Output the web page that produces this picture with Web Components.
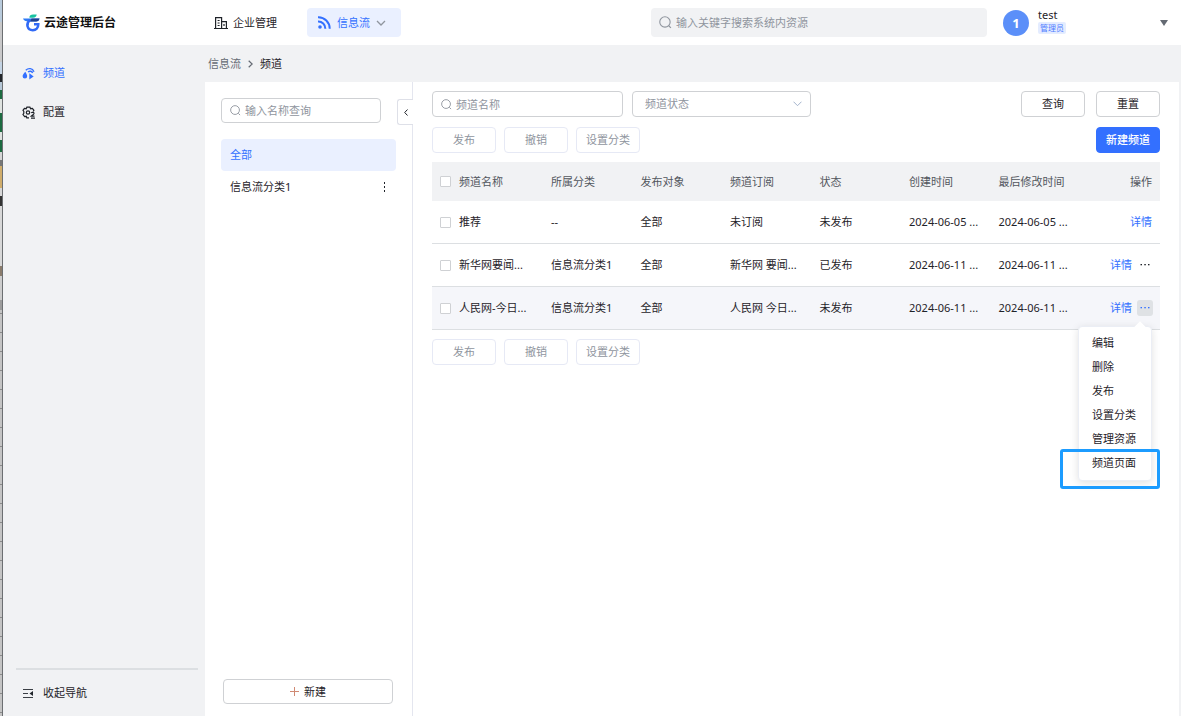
<!DOCTYPE html>
<html lang="zh-CN">
<head>
<meta charset="utf-8">
<title>云途管理后台</title>
<style>
html,body{margin:0;background:#fff}
body{font:11px/16px "Noto Sans","Noto Sans CJK SC",sans-serif;color:#1f2329}
</style>
</head>
<body>
<admin-app></admin-app>
<script>
const base = `<style>
*{box-sizing:border-box}
button,input,select{font:inherit;color:inherit;margin:0}
button{cursor:pointer}
svg{display:block;flex:none}
a{text-decoration:none;color:inherit}
</style>`;
function define(name, html, setup) {
  const t = document.createElement('template');
  t.innerHTML = base + html;
  customElements.define(name, class extends HTMLElement {
    constructor() {
      super();
      this.attachShadow({ mode: 'open' }).append(t.content.cloneNode(true));
    }
    connectedCallback() { if (setup) setup(this, this.shadowRoot); }
  });
}

/* Outlined / primary / disabled button */
define('ui-button', `<style>
:host{display:block;width:64px}
button{display:flex;align-items:center;justify-content:center;gap:5px;width:100%;height:var(--control-height,26px);padding:0;border:1px solid #cfd1d4;border-radius:4px;background:#fff}
:host([kind=primary]) button{background:#3370ff;border-color:#3370ff;color:#fff;font-weight:500}
:host([kind=disabled]) button{border-color:#e6e9f5;color:#8f959e}
</style><button type="button"><slot></slot></button>`, (el, root) => {
  root.querySelector('button').disabled = el.getAttribute('kind') === 'disabled';
});

/* Text box with a magnifier */
define('search-box', `<style>
:host{display:block}
label{display:flex;align-items:center;gap:4px;height:var(--control-height,26px);padding:0 8px;border:1px solid #cfd1d4;border-radius:4px;background:#fff;color:#8f959e}
:host([filled]) label{height:29px;border:0;background:#f1f2f4}
:host([filled]) svg{width:13px;height:13px}
input{flex:1;min-width:0;padding:0;border:0;outline:0;background:none;height:18px}
input::placeholder{color:#8f959e;opacity:1}
</style><label><svg width="11" height="11" viewBox="0 0 12 12" fill="none" stroke="#8f959e"><circle cx="5.5" cy="5.5" r="4.800"/><path d="M9 9L11 11"/></svg><input type="text"></label>`, (el, root) => {
  const i = root.querySelector('input');
  i.placeholder = el.getAttribute('placeholder');
  i.setAttribute('aria-label', i.placeholder);
});

/* Slice of the desktop that shows left of the window */
define('desktop-edge', `<style>
:host{display:block;border-right:1px solid #6c6f72;
background:
linear-gradient(#b9cbdc 0 22px,#c9c9ca 22px 62px,#c3d3e3 62px 74px,#23262b 74px 82px,#b5c7d6 82px 90px,#1d6b41 90px 99px,#dfe3e0 99px 113px,#1d6b41 113px 132px,#dfe3e0 132px 140px,#1d6b41 140px 152px,#d6d6d6 152px 160px,#777 160px 166px,#d0ad6b 166px 188px,#d8d8d8 188px 196px,#333 196px 206px,#d8d8d8 206px 266px,#8a7c6c 266px 276px,#cdcdcd 276px 300px,#9c9c9c 300px 310px,transparent 310px),
repeating-linear-gradient(#c4c4c4 0 9px,#8b8b8b 9px 10px,#c4c4c4 10px 19px)}
</style>`);

define('top-bar', `<style>
:host{display:flex;align-items:center;height:45px;padding:0 13px 0 20px;background:#fff}
.brand{display:flex;align-items:center;gap:3px;width:191px;margin:0;font-size:12px;line-height:16px;font-weight:700;color:#111}
nav{display:flex;align-items:center;gap:20px}
nav a{display:flex;align-items:center;gap:6px;height:29px}
nav a:first-child{gap:5px;padding-right:10px}
nav a.on{padding:0 15px 0 11px;background:#eaf0ff;color:#3370ff;border-radius:4px}
search-box{width:336px;margin:0 16px 0 auto}
.account{display:flex;align-items:center;width:165px}
.avatar{display:grid;place-items:center;width:26px;height:26px;border-radius:50%;background:#5b8ff9;color:#fff;font:700 13px/16px "Noto Sans",sans-serif}
.who{margin-left:9px;flex:1}
.who b{display:block;font-weight:400;line-height:14px}
.who span{display:inline-block;vertical-align:top;padding:0 2px;font-size:8px;line-height:12px;border-radius:2px;background:#e4ecff;color:#4f7dff}
</style>
<h1 class="brand"><svg width="18" height="18" viewBox="0 0 18 18"><path d="M6.400 3.700C6.400 1.600 7.800.5 10 .5h3.700c-.1 2-1.400 3.200-3.700 3.200z" fill="#19c2a0"/><path d="M0 4.400h16.500c-.3 2-1.500 3-3.500 3H5.500C2.500 7.400.6 6.500 0 4.400z" fill="#2f7bf5"/><path d="M7 5.800C4.800 7.800 3.900 10 4.500 12.300c.6 2.300 2.700 3.900 5.300 3.900 3.200 0 5.500-2.200 5.500-5.900H11" fill="none" stroke="#316af6" stroke-width="2.500"/><path d="M8.500 4.400h8c-.3 2-1.500 3-3.500 3H7.200z" fill="#22418f"/></svg>云途管理后台</h1>
<nav>
<a href="#org"><svg width="14" height="14" viewBox="0 0 14 14" fill="none" stroke="#1f2329" stroke-width="1.200"><path d="M1.600 12.500V1.600h6v10.900M7.600 5.600h4.800v6.900M0 12.500h14M3.600 4.500h2M3.600 7h2M3.600 9.500h2M10 8v2"/></svg>企业管理</a>
<a href="#feed" class="on"><svg width="13" height="13" viewBox="0 0 13 13" fill="none" stroke="#3370ff" stroke-width="2"><circle cx="2" cy="11" r="1.800" fill="#3370ff" stroke="none"/><path d="M0 5.500A7 7 0 0 1 7.300 12.800M0 1.300A11.300 11.300 0 0 1 11.700 12.800"/></svg>信息流<svg width="10" height="6" viewBox="0 0 10 6" fill="none" stroke="#8f959e" stroke-width="1.300"><path d="M1 1l4 4 4-4"/></svg></a>
</nav>
<search-box filled placeholder="输入关键字搜索系统内资源"></search-box>
<div class="account"><span class="avatar">1</span><div class="who"><b>test</b><span>管理员</span></div><svg width="8" height="6" viewBox="0 0 8 6"><path d="M0 0h8L4 6z" fill="#646a73"/></svg></div>`);

define('side-nav', `<style>
:host{display:flex;flex-direction:column;width:202px;padding:16px 7px 11px 13px;background:#f1f2f4}
a,button{display:flex;align-items:center;gap:8px;height:24px;padding:0 6px}
a{margin-bottom:15px}
a.on{color:#3370ff}
button{border:0;background:none;gap:9px}
.foot{margin-top:auto;padding-top:11px;border-top:2px solid #dcdfe2}
</style>
<a href="#channel" class="on"><svg width="13" height="13" viewBox="0 0 13 13"><path d="M3.300 4.800C1.600 6.800.6 8 .6 9.300a2.300 2.300 0 0 0 4.600 0C5.200 8 4.300 6.600 3.300 4.800z" fill="#3370ff"/><path d="M7.300 6.300L11.700 9.400 7.300 12.500z" fill="#3370ff"/><path d="M3.800 3.200C6.500.6 10.500 1.200 12 4.700M6 5c1.700-1.300 3.700-.9 4.700.8" fill="none" stroke="#3370ff" stroke-width="1.400"/></svg>频道</a>
<a href="#config"><svg width="13" height="13" viewBox="0 0 13 13" fill="none" stroke="#1f2329" stroke-width="1.200"><path d="M7 11.800H4.800l-.5-1.500-1.700.3L1 8.500l.8-1.200V5.400L1 4.300l1.400-2 1.800.4.700-1.500h3l.7 1.500 1.800-.4 1.500 2-.7 1.200"/><circle cx="6" cy="6.500" r="1.700"/><path d="M9 12.200h4M9.300 6.900c.5-.9 3-.9 2.700.6-.2 1-1.800 1.500-2.800 2.600H12.500"/></svg>配置</a>
<div class="foot"><button type="button"><svg width="12" height="11" viewBox="0 0 12 11" fill="none" stroke="#3b3f45"><path d="M1 1.500h10M1 5.500h5M1 9.500h10"/><path d="M11 3v5L7.500 5.500z" fill="#1f2329" stroke="none"/></svg>收起导航</button></div>`);

define('crumb-bar', `<style>
:host{display:flex;align-items:center;height:37px;padding:0 3px;gap:7px;background:#f1f2f4}
a{color:#646a73}
</style><a href="#feed">信息流</a><svg width="5" height="8" viewBox="0 0 5 8" fill="none" stroke="#646a73" stroke-width="1.200"><path d="M.7.7L4.200 4 .7 7.300"/></svg><span>频道</span>`);

define('category-panel', `<style>
:host{--control-height:25px;display:flex;flex-direction:column;position:relative;width:208px;padding:16px 16px 12px;border-right:1px solid #e4e6ef;background:#fff}
search-box{width:160px;margin-bottom:16px}
ul{list-style:none;margin:0;padding:0}
li{display:flex;align-items:center;justify-content:space-between;height:32px;padding:0 10px 0 9px;border-radius:4px}
li.on{background:#eaf0ff;color:#3370ff}
li button{border:0;background:none;padding:0}
.fold{position:absolute;right:-1px;top:17px;width:16px;height:26px;padding:0;border:1px solid #dee0e8;border-right:0;border-radius:3px 0 0 3px;background:#fff;display:grid;place-items:center}
ui-button{width:170px;margin:auto 0 0 2px}
</style>
<search-box placeholder="输入名称查询"></search-box>
<ul><li class="on"><a href="#all">全部</a></li><li><a href="#c1">信息流分类1</a><button type="button" aria-label="更多"><svg width="3" height="10" viewBox="0 0 3 10" fill="#1f2329"><rect x="1" width="1" height="2"/><rect x="1" y="4" width="1" height="2"/><rect x="1" y="8" width="1" height="2"/></svg></button></li></ul>
<button class="fold" type="button" aria-label="收起"><svg width="4" height="7" viewBox="0 0 4 7" fill="none" stroke="#1f2329"><path d="M3.500.5L.7 3.500l2.800 3"/></svg></button>
<ui-button><svg width="9" height="9" viewBox="0 0 9 9" stroke="#d08a74"><path d="M0 4.500h9M4.500 0v9"/></svg>新建</ui-button>`);

define('channel-filters', `<style>
:host{display:flex;align-items:center;gap:9px}
search-box{width:191px}
.sel{position:relative;width:179px}
select{display:block;width:100%;height:26px;padding:0 12px;appearance:none;border:1px solid #cfd1d4;border-radius:4px;background:#fff;color:#8f959e}
.sel svg{position:absolute;right:9px;top:10px;pointer-events:none}
.end{display:flex;gap:11px;margin-left:auto}
</style>
<search-box placeholder="频道名称"></search-box>
<div class="sel"><select aria-label="频道状态"><option>频道状态</option></select><svg width="9" height="6" viewBox="0 0 9 6" fill="none" stroke="#a3b3cc"><path d="M.5.700l4 4 4-4"/></svg></div>
<div class="end"><ui-button>查询</ui-button><ui-button>重置</ui-button></div>`);

define('batch-actions', `<style>
:host{display:flex;gap:8px}
::slotted(*){margin-left:auto}
</style><ui-button kind="disabled">发布</ui-button><ui-button kind="disabled">撤销</ui-button><ui-button kind="disabled">设置分类</ui-button><slot></slot>`);

/* Drop-down menu of a row, with the framed last entry */
define('action-menu', `<style>
:host{display:block;position:absolute;top:39px;right:1px;width:74px;padding:4px 0 5px;background:#fff;border:1px solid #ebeef5;border-radius:4px;box-shadow:0 2px 8px rgba(0,0,0,.12);z-index:2;text-align:left}
:host::before{content:"";position:absolute;top:-4px;right:7px;width:8px;height:8px;background:#fff;transform:rotate(45deg)}
button{display:block;position:relative;width:100%;height:24px;padding:0 0 0 13px;border:0;background:none;text-align:left}
.frame{position:absolute;left:-19px;right:-9px;bottom:-9px;height:40px;border:3px solid #1c9cff;border-radius:3px;pointer-events:none}
</style><button type="button">编辑</button><button type="button">删除</button><button type="button">发布</button><button type="button">设置分类</button><button type="button">管理资源</button><button type="button">频道页面</button><span class="frame"></span>`);

define('channel-table', `<style>
:host{display:block}
table{width:100%;table-layout:fixed;border-collapse:separate;border-spacing:0}
th{height:39px;background:#f1f2f4;color:#51565d;font-weight:400;text-align:left}
td{height:43px;border-bottom:1px solid #dcdfe2}
th,td{padding:0 8px;white-space:nowrap}
tr.hover td{background:#f5f6fa}
.c0{width:19px}.c1{width:92px}.c8{width:80px}
th:first-child,td:first-child{padding-right:0}
input{display:block;appearance:none;width:11px;height:11px;margin:0;border:1px solid #cfd1d4;border-radius:1px;background:#fff}
th:last-child{text-align:right}
.ops{display:flex;align-items:center;justify-content:flex-end;gap:5px;height:42px;margin:0 -1px 0 -8px;position:relative}
.ops.one{margin-right:0}
.ops a{color:#3370ff}
.ops button{display:grid;place-items:center;width:16px;height:16px;padding:0;border:0;border-radius:3px;background:none;color:#1f2329}
.hover .ops button{background:#dfe2e5;color:#3370ff}
</style>
<table><colgroup><col class="c0"><col class="c1"><col><col><col><col><col><col><col class="c8"></colgroup>
<thead><tr><th><input type="checkbox" aria-label="全选"></th><th>频道名称</th><th>所属分类</th><th>发布对象</th><th>频道订阅</th><th>状态</th><th>创建时间</th><th>最后修改时间</th><th>操作</th></tr></thead><tbody></tbody></table>`, (el, root) => {
  const rows = [
    ['推荐', '--', '全部', '未订阅', '未发布', '2024-06-05 ...', '2024-06-05 ...'],
    ['新华网要闻...', '信息流分类1', '全部', '新华网 要闻...', '已发布', '2024-06-11 ...', '2024-06-11 ...'],
    ['人民网-今日...', '信息流分类1', '全部', '人民网 今日...', '未发布', '2024-06-11 ...', '2024-06-11 ...']
  ];
  const more = '<button type="button" aria-label="更多"><svg width="10" height="2" viewBox="0 0 10 2" fill="currentColor"><rect x=".500" width="1.500" height="1.300"/><rect x="4.300" width="1.500" height="1.300"/><rect x="8" width="1.500" height="1.300"/></svg></button>';
  root.querySelector('tbody').innerHTML = rows.map((r, i) =>
    `<tr class="${i === 2 ? 'hover' : ''}"><td><input type="checkbox" aria-label="${r[0]}"></td>${r.map(c => `<td>${c}</td>`).join('')}<td><div class="ops ${i ? '' : 'one'}"><a href="#detail">详情</a>${i ? more : ''}${i === 2 ? '<action-menu></action-menu>' : ''}</div></td></tr>`).join('');
});

define('channel-page', `<style>
:host{display:flex;flex-direction:column;gap:9px;flex:1;min-width:0;padding:9px 19px;background:#fff;border-right:2px solid #f1f2f4}
channel-filters{margin-bottom:1px}
</style>
<channel-filters></channel-filters>
<batch-actions><ui-button kind="primary">新建频道</ui-button></batch-actions>
<channel-table></channel-table>
<batch-actions></batch-actions>`);

define('admin-app', `<style>
:host{display:grid;grid-template-columns:3px minmax(0,1fr);min-height:100vh}
.window{display:flex;flex-direction:column}
.body{display:flex;flex:1}
main{display:flex;flex-direction:column;flex:1;min-width:0}
.work{display:flex;flex:1}
</style>
<desktop-edge></desktop-edge>
<div class="window"><top-bar></top-bar><div class="body"><side-nav></side-nav><main><crumb-bar></crumb-bar><div class="work"><category-panel></category-panel><channel-page></channel-page></div></main></div></div>`);
</script>
</body>
</html>
